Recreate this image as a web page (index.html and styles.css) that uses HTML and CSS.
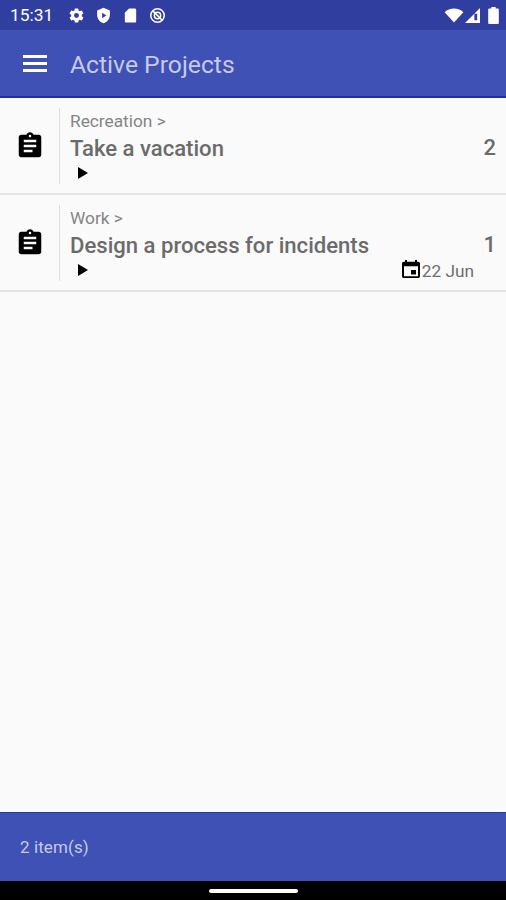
FILE: index.html
```html
<!DOCTYPE html>
<html>
<head>
  <title>Active Projects</title>
  <link rel="stylesheet" href="styles.css">
</head>
<body>
  <div class="phone">

    <!-- status bar -->
    <div class="status-bar">
      <span class="clock">15:31</span>
      <div class="status-left">
        <svg class="status-icon" viewBox="0 0 24 24"><path d="M19.4 13c.04-.32.1-.66.1-1s-.06-.68-.1-1l2.1-1.65c.2-.15.25-.42.12-.64l-2-3.46c-.12-.22-.39-.3-.61-.22l-2.49 1c-.52-.4-1.08-.73-1.69-.98l-.38-2.65A.49.49 0 0 0 14 2h-4c-.25 0-.46.18-.49.42l-.38 2.65c-.61.25-1.17.59-1.69.98l-2.49-1c-.23-.09-.49 0-.61.22l-2 3.46c-.13.22-.07.49.12.64L4.6 11c-.04.32-.1.66-.1 1s.06.68.1 1l-2.1 1.65c-.2.15-.25.42-.12.64l2 3.46c.12.22.39.3.61.22l2.49-1c.52.4 1.08.73 1.69.98l.38 2.65c.03.24.24.42.49.42h4c.25 0 .46-.18.49-.42l.38-2.65c.61-.25 1.17-.59 1.69-.98l2.49 1c.23.09.49 0 .61-.22l2-3.46c.12-.22.07-.49-.12-.64L19.4 13zM12 15.5a3.5 3.5 0 1 1 0-7 3.5 3.5 0 0 1 0 7z"/></svg>
        <svg class="status-icon" viewBox="0 0 24 24"><path fill-rule="evenodd" d="M12 1 3 5v6c0 5.5 3.8 10.7 9 12 5.200-1.300 9-6.500 9-12V5l-9-4zM10 8l6 4-6 4V8z"/></svg>
        <svg class="status-icon" viewBox="0 0 24 24"><path d="M18 2h-8L4 8v12c0 1.100.9 2 2 2h12c1.100 0 2-.9 2-2V4c0-1.100-.9-2-2-2z"/></svg>
        <svg class="status-icon" viewBox="0 0 24 24"><circle cx="12" cy="12" r="9.500" fill="none" stroke="#fff" stroke-width="2.200"/><circle cx="12" cy="12" r="4.500" fill="none" stroke="#fff" stroke-width="2"/><path d="M5.500 5.500l13 13" stroke="#fff" stroke-width="2.200"/></svg>
      </div>
      <div class="status-right">
        <svg class="wifi" viewBox="0 0 20 16"><path d="M0 4.500C2.800 1.800 6.200.5 10 .5s7.200 1.300 10 4l-10 11L0 4.500z"/></svg>
        <svg class="signal" viewBox="0 0 16 16"><path fill-rule="evenodd" d="M16 0v16H0L16 0zm-3 6h-3v7h3V6z"/></svg>
        <svg class="battery" viewBox="0 0 10 16"><path d="M3 0h4v1.500h2a1 1 0 0 1 1 1V15a1 1 0 0 1-1 1H1a1 1 0 0 1-1-1V2.500a1 1 0 0 1 1-1h2V0z"/></svg>
      </div>
    </div>

    <!-- toolbar -->
    <div class="toolbar">
      <div class="menu-btn"><span></span><span></span><span></span></div>
      <div class="toolbar-title">Active Projects</div>
    </div>

    <!-- project list -->
    <div class="list">

      <div class="row">
        <div class="row-icon">
          <svg class="clip" viewBox="0 0 24 24"><path d="M19 3h-4.180C14.400 1.840 13.300 1 12 1s-2.400.84-2.820 2H5c-1.100 0-2 .9-2 2v14c0 1.100.9 2 2 2h14c1.100 0 2-.9 2-2V5c0-1.100-.9-2-2-2zm-7 0c.55 0 1 .45 1 1s-.45 1-1 1-1-.45-1-1 .45-1 1-1zm2 14H7v-2h7v2zm3-4H7v-2h10v2zm0-4H7V7h10v2z"/></svg>
        </div>
        <div class="row-body">
          <div class="crumb">Recreation &gt;</div>
          <div class="name">Take a vacation</div>
          <div class="play"></div>
        </div>
        <div class="count">2</div>
      </div>

      <div class="row">
        <div class="row-icon">
          <svg class="clip" viewBox="0 0 24 24"><path d="M19 3h-4.180C14.400 1.840 13.300 1 12 1s-2.400.84-2.820 2H5c-1.100 0-2 .9-2 2v14c0 1.100.9 2 2 2h14c1.100 0 2-.9 2-2V5c0-1.100-.9-2-2-2zm-7 0c.55 0 1 .45 1 1s-.45 1-1 1-1-.45-1-1 .45-1 1-1zm2 14H7v-2h7v2zm3-4H7v-2h10v2zm0-4H7V7h10v2z"/></svg>
        </div>
        <div class="row-body">
          <div class="crumb">Work &gt;</div>
          <div class="name">Design a process for incidents</div>
          <div class="play"></div>
        </div>
        <div class="count">1</div>
        <div class="due">
          <svg class="cal" viewBox="3 1 18 20" preserveAspectRatio="none"><path d="M17 12h-5v5h5v-5zM16 1v2H8V1H6v2H5c-1.110 0-2 .9-2 2v14c0 1.100.89 2 2 2h14c1.100 0 2-.9 2-2V5c0-1.100-.9-2-2-2h-1V1h-2zm3 18H5V8h14v11z"/></svg>
          <span>22 Jun</span>
        </div>
      </div>

    </div>

    <!-- bottom bar -->
    <div class="footer">2 item(s)</div>
    <div class="nav-bar"><span class="home-pill"></span></div>

  </div>
</body>
</html>
```

FILE: styles.css
```css
html, body {
  margin: 0;
  padding: 0;
}

body {
  font-family: Roboto, sans-serif;
  background-color: #fafafa;
}

.phone {
  display: flex;
  flex-direction: column;
  width: 506px;
  height: 900px;
  overflow: hidden;
}

/* Status bar */
.status-bar {
  display: flex;
  align-items: center;
  height: 30px;
  padding: 0 7px 0 10px;
  box-sizing: border-box;
  background-color: #303f9f;
  color: #fff;
}

.clock {
  font-size: 17.4px;
  width: 58px;
  flex-shrink: 0;
}

.status-left {
  display: flex;
  align-items: center;
  gap: 10px;
  flex: 1;
}

.status-icon {
  width: 17px;
  height: 17px;
  fill: #fff;
}

.status-right {
  display: flex;
  align-items: center;
}

.wifi {
  width: 20px;
  height: 15px;
  fill: #fff;
}

.signal {
  width: 17px;
  height: 15px;
  fill: #fff;
}

.battery {
  width: 11px;
  height: 17px;
  margin-left: 7px;
  fill: #fff;
}

/* Toolbar */
.toolbar {
  display: flex;
  align-items: center;
  height: 68px;
  box-sizing: border-box;
  background-color: #3f51b5;
  border-bottom: 2px solid #1a2fa8;
}

.menu-btn {
  display: flex;
  flex-direction: column;
  gap: 4px;
  margin-left: 23px;
  width: 24px;
}

.menu-btn span {
  height: 3px;
  background-color: #fff;
}

.toolbar-title {
  margin-left: 23px;
  padding-top: 2px;
  font-size: 24.7px;
  color: #c5cae9;
}

/* List */
.list {
  flex: 1;
}

.row {
  position: relative;
  display: flex;
  height: 97px;
  box-sizing: border-box;
  padding-top: 10px;
  border-bottom: 2px solid #e4e4e4;
}

.row-icon {
  display: flex;
  align-items: center;
  justify-content: center;
  width: 59px;
  height: 76px;
  border-right: 1px solid #dedede;
}

.clip {
  width: 30px;
  height: 30px;
  fill: #000;
}

.row-body {
  flex: 1;
  padding: 2px 0 0 10px;
  min-width: 0;
}

.crumb {
  font-size: 17.3px;
  line-height: 22px;
  color: #858585;
}

.name {
  margin-top: 2px;
  font-size: 22.1px;
  line-height: 28px;
  font-weight: 500;
  color: #6b6b6b;
}

.play {
  width: 0;
  height: 0;
  margin: 5px 0 0 8px;
  border-left: 10px solid #000;
  border-top: 6px solid transparent;
  border-bottom: 6px solid transparent;
}

.count {
  padding: 26px 10px 0 0;
  font-size: 22px;
  line-height: 28px;
  font-weight: 500;
  color: #6b6b6b;
}

.due {
  position: absolute;
  right: 32px;
  bottom: 9px;
  display: flex;
  align-items: center;
  gap: 2px;
  font-size: 17.3px;
  color: #6e6e6e;
}

.cal {
  width: 18px;
  height: 18px;
  margin-bottom: 3px;
  fill: #000;
}

/* Footer */
.footer {
  display: flex;
  align-items: center;
  height: 69px;
  padding-left: 20px;
  box-sizing: border-box;
  background-color: #3f51b5;
  border-top: 1px solid #1f3cab;
  font-size: 17px;
  letter-spacing: 0.1px;
  color: #c5cae9;
}

.nav-bar {
  display: flex;
  justify-content: center;
  align-items: center;
  height: 19px;
  background-color: #000;
}

.home-pill {
  width: 89px;
  height: 4px;
  background-color: #fff;
  border-radius: 2px;
}
```
